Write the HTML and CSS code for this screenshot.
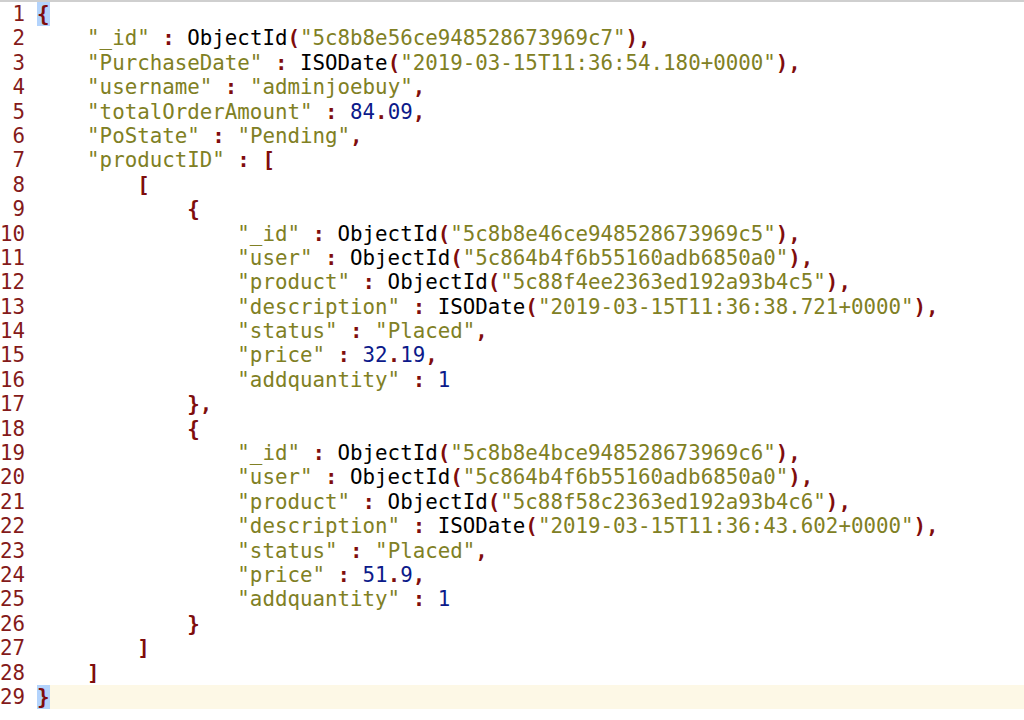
FILE: index.html
```html
<!DOCTYPE html>
<html>
<head>
<meta charset="utf-8">
<link rel="stylesheet" href="styles.css">
</head>
<body>
<div class="editor">
<div class="row"><span class="ln">1</span><span class="code"><span class="p match">{</span></span></div>
<div class="row"><span class="ln">2</span><span class="code">	<span class="s">"_id"</span> <span class="p">:</span> ObjectId<span class="p">(</span><span class="s">"5c8b8e56ce948528673969c7"</span><span class="p">),</span></span></div>
<div class="row"><span class="ln">3</span><span class="code">	<span class="s">"PurchaseDate"</span> <span class="p">:</span> ISODate<span class="p">(</span><span class="s">"2019-03-15T11:36:54.180+0000"</span><span class="p">),</span></span></div>
<div class="row"><span class="ln">4</span><span class="code">	<span class="s">"username"</span> <span class="p">:</span> <span class="s">"adminjoebuy"</span><span class="p">,</span></span></div>
<div class="row"><span class="ln">5</span><span class="code">	<span class="s">"totalOrderAmount"</span> <span class="p">:</span> <span class="n">84</span><span class="p">.</span><span class="n">09</span><span class="p">,</span></span></div>
<div class="row"><span class="ln">6</span><span class="code">	<span class="s">"PoState"</span> <span class="p">:</span> <span class="s">"Pending"</span><span class="p">,</span></span></div>
<div class="row"><span class="ln">7</span><span class="code">	<span class="s">"productID"</span> <span class="p">: [</span></span></div>
<div class="row"><span class="ln">8</span><span class="code">		<span class="p">[</span></span></div>
<div class="row"><span class="ln">9</span><span class="code">			<span class="p">{</span></span></div>
<div class="row"><span class="ln">10</span><span class="code">				<span class="s">"_id"</span> <span class="p">:</span> ObjectId<span class="p">(</span><span class="s">"5c8b8e46ce948528673969c5"</span><span class="p">),</span></span></div>
<div class="row"><span class="ln">11</span><span class="code">				<span class="s">"user"</span> <span class="p">:</span> ObjectId<span class="p">(</span><span class="s">"5c864b4f6b55160adb6850a0"</span><span class="p">),</span></span></div>
<div class="row"><span class="ln">12</span><span class="code">				<span class="s">"product"</span> <span class="p">:</span> ObjectId<span class="p">(</span><span class="s">"5c88f4ee2363ed192a93b4c5"</span><span class="p">),</span></span></div>
<div class="row"><span class="ln">13</span><span class="code">				<span class="s">"description"</span> <span class="p">:</span> ISODate<span class="p">(</span><span class="s">"2019-03-15T11:36:38.721+0000"</span><span class="p">),</span></span></div>
<div class="row"><span class="ln">14</span><span class="code">				<span class="s">"status"</span> <span class="p">:</span> <span class="s">"Placed"</span><span class="p">,</span></span></div>
<div class="row"><span class="ln">15</span><span class="code">				<span class="s">"price"</span> <span class="p">:</span> <span class="n">32</span><span class="p">.</span><span class="n">19</span><span class="p">,</span></span></div>
<div class="row"><span class="ln">16</span><span class="code">				<span class="s">"addquantity"</span> <span class="p">:</span> <span class="n">1</span></span></div>
<div class="row"><span class="ln">17</span><span class="code">			<span class="p">},</span></span></div>
<div class="row"><span class="ln">18</span><span class="code">			<span class="p">{</span></span></div>
<div class="row"><span class="ln">19</span><span class="code">				<span class="s">"_id"</span> <span class="p">:</span> ObjectId<span class="p">(</span><span class="s">"5c8b8e4bce948528673969c6"</span><span class="p">),</span></span></div>
<div class="row"><span class="ln">20</span><span class="code">				<span class="s">"user"</span> <span class="p">:</span> ObjectId<span class="p">(</span><span class="s">"5c864b4f6b55160adb6850a0"</span><span class="p">),</span></span></div>
<div class="row"><span class="ln">21</span><span class="code">				<span class="s">"product"</span> <span class="p">:</span> ObjectId<span class="p">(</span><span class="s">"5c88f58c2363ed192a93b4c6"</span><span class="p">),</span></span></div>
<div class="row"><span class="ln">22</span><span class="code">				<span class="s">"description"</span> <span class="p">:</span> ISODate<span class="p">(</span><span class="s">"2019-03-15T11:36:43.602+0000"</span><span class="p">),</span></span></div>
<div class="row"><span class="ln">23</span><span class="code">				<span class="s">"status"</span> <span class="p">:</span> <span class="s">"Placed"</span><span class="p">,</span></span></div>
<div class="row"><span class="ln">24</span><span class="code">				<span class="s">"price"</span> <span class="p">:</span> <span class="n">51</span><span class="p">.</span><span class="n">9</span><span class="p">,</span></span></div>
<div class="row"><span class="ln">25</span><span class="code">				<span class="s">"addquantity"</span> <span class="p">:</span> <span class="n">1</span></span></div>
<div class="row"><span class="ln">26</span><span class="code">			<span class="p">}</span></span></div>
<div class="row"><span class="ln">27</span><span class="code">		<span class="p">]</span></span></div>
<div class="row"><span class="ln">28</span><span class="code">	<span class="p">]</span></span></div>
<div class="row current"><span class="ln">29</span><span class="code"><span class="p match">}</span></span></div>
</div>
</body>
</html>
```
FILE: styles.css
```css
html, body {
  margin: 0;
  padding: 0;
  background: #ffffff;
}
.editor {
  border-top: 2px solid #cfcfcf;
  font-family: "DejaVu Sans Mono", "Liberation Mono", monospace;
  font-size: 20.8px;
  line-height: 24.4px;
  color: #000000;
  width: 1024px;
  height: 718px;
  overflow: hidden;
}
.row {
  display: flex;
  height: 24.4px;
}
.ln {
  width: 25px;
  flex: none;
  text-align: right;
  color: #841a1a;
  margin-right: 12px;
}
.code {
  flex: 1;
  white-space: pre;
  tab-size: 4;
  -moz-tab-size: 4;
}
.current .code {
  background: #fdf8e6;
}
.s { color: #808024; }
.p { color: #7f0d0d; font-weight: bold; }
.n { color: #0c1a8a; }
.match { background: #b3d3fc; }
```
